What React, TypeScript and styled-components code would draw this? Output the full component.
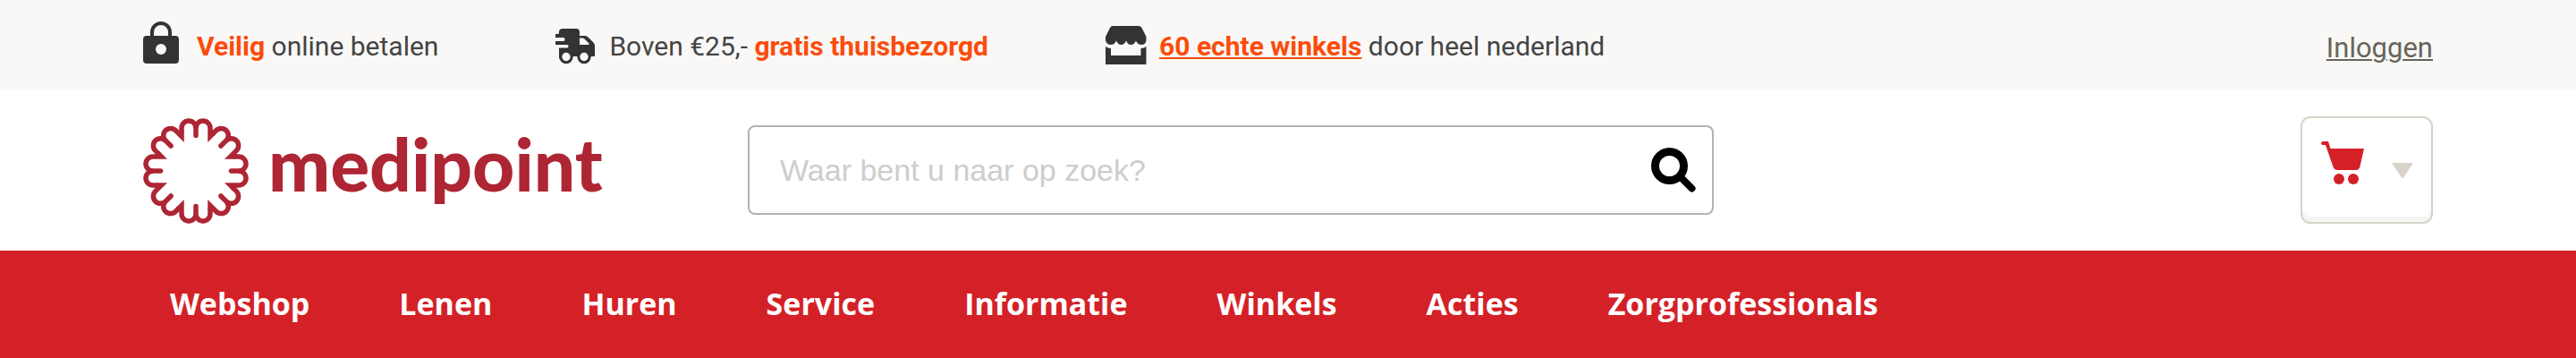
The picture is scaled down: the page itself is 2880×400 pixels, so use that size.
import React from "react";
import styled, { createGlobalStyle } from "styled-components";

const GlobalStyle = createGlobalStyle`
  *, *::before, *::after { box-sizing: border-box; }
  body { margin: 0; background: #fff; font-family: Roboto, "Liberation Sans", sans-serif; }
`;

const TopBar = styled.div`
  display: flex;
  align-items: flex-end;
  justify-content: space-between;
  padding: 24px 160px 28px;
  background: #f9f8f6;
`;

const UspList = styled.ul`
  display: flex;
  gap: 131px;
  margin: 0;
  padding: 0;
  list-style: none;
`;

const Usp = styled.li`
  display: grid;
  grid-template-columns: 60px auto;
  align-items: end;
  color: #444;
  font-size: 30px;
  line-height: 40px;
  white-space: nowrap;

  svg { display: block; }
  strong, a { color: #fb4c0c; font-weight: 700; }
  a { text-decoration: underline; text-decoration-thickness: 2px; text-underline-offset: 2px; }
`;

const LoginLink = styled.a`
  color: #66655a;
  font-size: 31px;
  line-height: 36px;
  text-decoration-thickness: 2px;
  text-underline-offset: 2px;
`;

const Header = styled.header`
  display: grid;
  grid-template-columns: 676px minmax(0, 1080px) 1fr;
  align-items: center;
  padding: 30px 160px;
`;

const Logo = styled.a`
  display: flex;
  align-items: flex-start;
  gap: 20px;
  color: #ae2533;
  font-family: Lato, sans-serif;
  font-size: 82px;
  font-weight: 900;
  line-height: 104px;
  text-decoration: none;
`;

const SearchForm = styled.form`
  display: flex;
  align-items: center;
  height: 100px;
  padding: 0 18px 0 34px;
  border: 2px solid #adb3b9;
  border-radius: 8px;
`;

const SearchInput = styled.input`
  flex: 1;
  min-width: 0;
  height: 60px;
  padding: 0;
  border: 0;
  outline: 0;
  background: none;
  font-family: "Liberation Sans", Arial, sans-serif;
  font-size: 34px;
  &::placeholder { color: #cdcdcd; opacity: 1; }
`;

const IconButton = styled.button`
  display: flex;
  padding: 0;
  border: 0;
  background: none;
`;

const CartButton = styled.button`
  display: flex;
  align-items: center;
  justify-self: end;
  gap: 31px;
  width: 148px;
  height: 120px;
  padding: 0 20px 16px 21px;
  border: 2px solid #d7d3c8;
  border-radius: 11px;
  background: #fff;
  box-shadow: inset 0 -6px 0 #f5f5f5;
`;

const Caret = styled.svg`
  margin-top: 18px;
`;

const Nav = styled.nav`
  padding: 0 190px 2px;
  background: #d42127;
`;

const NavList = styled.ul`
  display: flex;
  gap: 100px;
  margin: 0;
  padding: 0;
  list-style: none;
`;

const NavLink = styled.a`
  display: block;
  color: #fff;
  font-family: "Open Sans", "Noto Sans", sans-serif;
  font-size: 34px;
  font-weight: 700;
  line-height: 118px;
  text-decoration: none;
`;

const LockIcon = () => (
  <svg width="40" height="48" viewBox="0 0 40 48" aria-hidden="true">
    <path d="M10 18V12a10 10 0 0 1 20 0v6" fill="none" stroke="#333" strokeWidth="4" />
    <path
      d="M4 16H36a4 4 0 0 1 4 4V43a4 4 0 0 1-4 4H4a4 4 0 0 1-4-4V20a4 4 0 0 1 4-4zM20 25a6 6 0 1 0 0 12a6 6 0 1 0 0-12z"
      fill="#333"
      fillRule="evenodd"
    />
  </svg>
);

const TruckIcon = () => (
  <svg width="44" height="40" viewBox="0 0 44 40" aria-hidden="true">
    <path
      d="M8 0H23Q27 0 27 4V8H33Q35 8 37 10L42 15Q44 17 44 19V31H39A7 7 0 0 1 25 31H19A7 7 0 0 1 4 31V21.500H13Q14.500 21.500 14.500 19.700T13 18H0V14H9Q10.500 14 10.500 12T9 10H0V6H3Q4 6 4 4Q4 0 8 0zM27 10.500V18H37.500V16.500L32.500 11.500Q31.500 10.500 30 10.500z"
      fill="#333"
      fillRule="evenodd"
    />
    <circle cx="12" cy="31.500" r="6.200" fill="#f9f8f6" stroke="#333" strokeWidth="3" />
    <circle cx="32" cy="31.500" r="6.200" fill="#f9f8f6" stroke="#333" strokeWidth="3" />
  </svg>
);

const StoreIcon = () => (
  <svg width="46" height="43" viewBox="0 0 46 43" aria-hidden="true">
    <path
      d="M8 0H37Q39.500 0 40.500 2L45.500 12V16Q45 21 40 21Q36 21 34 16.500Q32 21 28.500 21Q25 21 23 16.500Q21 21 17.500 21Q14 21 12 16.500Q10 21 6 21Q1 21 0 16V12L5 2Q6 0 8 0z"
      fill="#333"
    />
    <path d="M0 23Q3 25 6 25V33H39.500V25Q43 25 45.500 23V43H0z" fill="#333" />
  </svg>
);

const PETAL_PAIRS = [0, 45, 90, 135, 180, 225, 270, 315];

const FlowerMark = () => (
  <svg width="120" height="120" viewBox="-59 -61 120 120" aria-hidden="true">
    {PETAL_PAIRS.map((angle) => (
      <g key={angle} transform={`rotate(${angle})`} fill="none" stroke="#ae2533" strokeWidth="5.500">
        <path d="M-16 -42V-48A8 8 0 0 1 0 -48A8 8 0 0 1 16 -48V-38.600L20 -42.600" />
        <path d="M0 -48V-39.500" strokeLinecap="round" />
      </g>
    ))}
  </svg>
);

const SearchIcon = () => (
  <svg width="50" height="50" viewBox="0 0 50 50" aria-hidden="true">
    <circle cx="20.500" cy="20.500" r="16" fill="none" stroke="#000" strokeWidth="9" />
    <path d="M33 33L45.500 45.500" stroke="#000" strokeWidth="8" strokeLinecap="round" />
  </svg>
);

const CartIcon = () => (
  <svg width="48" height="48" viewBox="0 0 48 48" fill="#d42127" aria-hidden="true">
    <path d="M2 0H8L10.500 8H48L43.500 28Q42.500 32 39 32H18.500Q15 32 13.500 28.500L5 4H2A2 2 0 0 1 2 0z" />
    <circle cx="20" cy="42" r="6" />
    <circle cx="36" cy="42" r="6" />
  </svg>
);

const CaretIcon = () => (
  <Caret width="24" height="18" viewBox="0 0 24 18" aria-hidden="true">
    <path d="M0 0H24L12 18z" fill="#d7d3c8" />
  </Caret>
);

const MENU = ["Webshop", "Lenen", "Huren", "Service", "Informatie", "Winkels", "Acties", "Zorgprofessionals"];

export default function App() {
  return (
    <>
      <GlobalStyle />
      <TopBar>
        <UspList>
          <Usp>
            <LockIcon />
            <span><strong>Veilig</strong> online betalen</span>
          </Usp>
          <Usp>
            <TruckIcon />
            <span>Boven €25,- <strong>gratis thuisbezorgd</strong></span>
          </Usp>
          <Usp>
            <StoreIcon />
            <span><a href="#winkels">60 echte winkels</a> door heel nederland</span>
          </Usp>
        </UspList>
        <LoginLink href="#inloggen">Inloggen</LoginLink>
      </TopBar>
      <Header>
        <Logo href="#home">
          <FlowerMark />
          <span>medipoint</span>
        </Logo>
        <SearchForm role="search" onSubmit={(e) => e.preventDefault()}>
          <SearchInput type="search" aria-label="Zoeken" placeholder="Waar bent u naar op zoek?" />
          <IconButton type="submit" aria-label="Zoek"><SearchIcon /></IconButton>
        </SearchForm>
        <CartButton type="button" aria-label="Winkelwagen">
          <CartIcon />
          <CaretIcon />
        </CartButton>
      </Header>
      <Nav aria-label="Hoofdmenu">
        <NavList>
          {MENU.map((label) => (
            <li key={label}><NavLink href={`#${label.toLowerCase()}`}>{label}</NavLink></li>
          ))}
        </NavList>
      </Nav>
    </>
  );
}
